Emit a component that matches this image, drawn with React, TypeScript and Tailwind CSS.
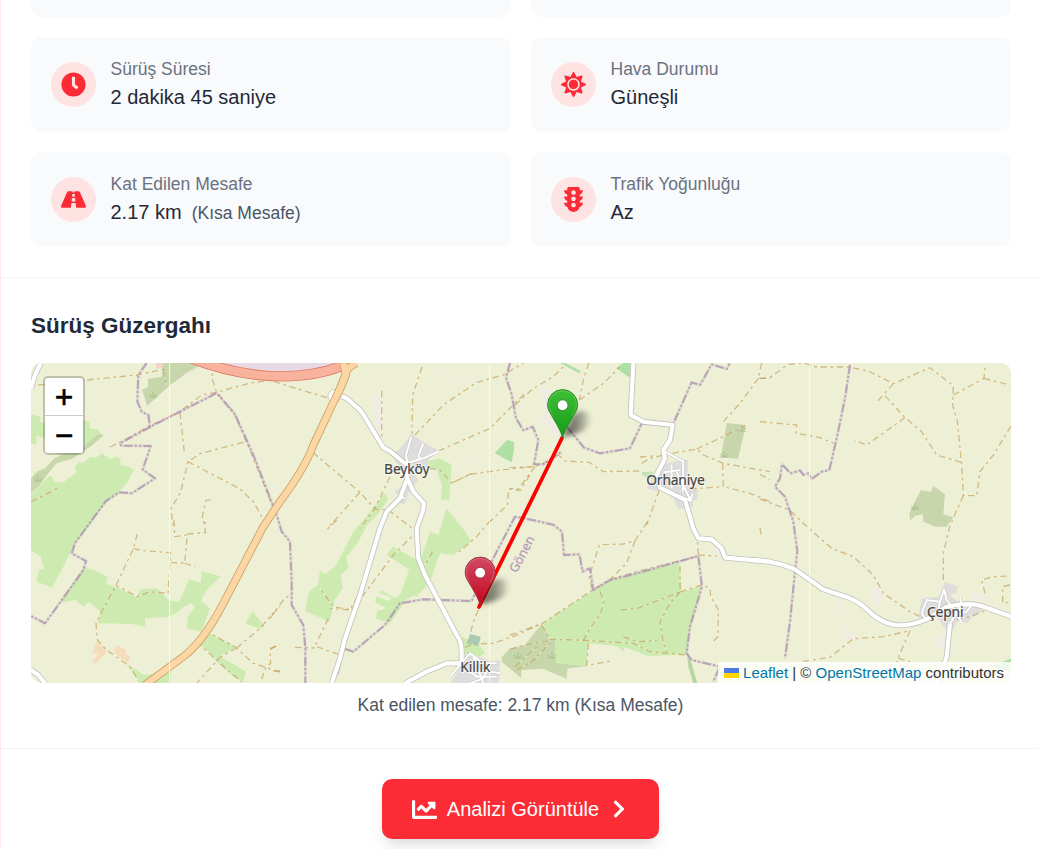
import type { ReactNode } from "react";
import { FaClock, FaSun, FaRoad, FaTrafficLight, FaChartLine, FaChevronRight } from "react-icons/fa";

type Shape = { at: [number, number]; d: string; color?: string; width?: number };

const A: [number, number] = [20, 355];
const B: [number, number] = [20, 520];
const C: [number, number] = [270, 355];
const D: [number, number] = [270, 520];
const E: [number, number] = [510, 355];
const F: [number, number] = [510, 520];
const G: [number, number] = [760, 355];
const H: [number, number] = [760, 520];

const MEADOW = "#cdebb0";
const SCRUB = "#c8d7ab";
const TOWN = "#dfdddc";
const YARD = "#f1ece2";
const ORCHARD = "#aedfa3";

const areas: Shape[] = [
  { at: A, color: MEADOW, d: "M33 178L62 186L60 200L78 205L190 195L208 200L210 220L235 224L246 240L215 265L170 290L140 302L75 290L75 250L50 240L48 270L33 265Z" },
  { at: A, color: SCRUB, d: "M33 370L50 350L75 340L105 308L190 275L235 238L252 240L215 272L160 310L110 325L85 355L60 390L33 414Z" },
  { at: A, color: MEADOW, d: "M33 416L60 392L90 360L105 380L130 382L172 350L162 338L178 320L186 326L210 306L228 308L245 294L270 312L292 304L304 318L298 328L328 335L342 345L318 388L298 410L270 430L240 465L205 512L33 512Z" },
  { at: B, color: MEADOW, d: "M33 0H222L165 70L130 140L96 203L48 184L58 148L72 146L62 110L33 90Z" },
  { at: B, color: MEADOW, d: "M192 140L240 158L264 172L258 192L288 200L350 230L362 208L412 205L448 242L478 245L507 178L543 188L545 154L602 169L560 210L543 242L570 265L545 335L500 325L503 290L524 262L514 248L490 262L470 278L440 292L375 295V320L335 312L233 310L240 274L208 247L190 260L165 240L118 250Z" },
  { at: B, color: MEADOW, d: "M552 330L652 382L600 408L678 455L670 486L640 470L590 425L560 390L528 365Z" },
  { at: B, color: MEADOW, d: "M698 274L734 318L722 328L676 310Z" },
  { at: B, color: MEADOW, d: "M318 430L372 465L452 455V490H360Z" },
  { at: B, color: "#f5dcba", d: "M230 364L258 385L256 402L226 432L216 426L234 404L218 396Z" },
  { at: B, color: "#f5dcba", d: "M290 375L318 390V402L330 410L324 430L280 396Z" },
  { at: A, color: "#f3d3c7", d: "M408 24H450V40H408Z" },
  { at: A, color: SCRUB, d: "M430 24H542L536 40L495 60L450 90L382 154L366 104L385 95L383 72L425 65Z" },
  { at: A, color: "#e8dae4", d: "M590 24H1000L960 42L850 53L700 42Z" },
  { at: C, color: TOWN, d: "M426 236L450 255L508 288L478 312L470 340L430 350L444 375L430 395L415 415L404 450L382 442L388 425L374 410L392 398L404 370L390 335L362 300L385 285Z" },
  { at: C, color: YARD, d: "M308 122L330 112L336 250L316 208Z" },
  { at: C, color: YARD, d: "M462 450L485 470L486 488L462 478Z" },
  { at: C, color: MEADOW, d: "M470 320L508 309L545 330L538 436L513 434L516 390L500 345L478 340Z" },
  { at: C, color: MEADOW, d: "M530 460L582 525L605 560L550 600L510 595L480 680L440 725L430 722L408 735L360 805L318 790L322 768L350 760L315 740L320 724L355 738L366 728L328 715L334 706L376 730L390 720L418 644L350 600L368 575L450 620L480 530L505 540Z" },
  { at: C, color: MEADOW, d: "M342 414L355 430L330 470L290 512L265 560L230 605L235 640L212 660L218 700L195 735L178 800L106 768L116 710L144 690L150 646L165 658L195 635L250 530L285 490Z" },
  { at: C, color: ORCHARD, d: "M674 294L712 254L732 262V285L725 322Z" },
  { at: D, color: MEADOW, d: "M575 350L625 372L645 400L620 415L580 400Z" },
  { at: D, color: "#aacbaf", d: "M600 342L632 350L626 378L590 372Z" },
  { at: D, color: TOWN, d: "M600 400L640 415L665 425L690 420L686 490H540L560 460L575 430Z" },
  { at: F, color: SCRUB, d: "M95 312L136 360L138 428L228 438L172 446L170 476L130 460L100 446L35 450L33 474L-25 425L-25 412L0 385L45 374Z" },
  { at: F, color: MEADOW, d: "M98 308L245 212L300 180L510 126L515 216L574 195L556 270L535 340L532 404L415 408L340 380L345 398L320 378L234 370L230 440L136 426V362L118 358Z" },
  { at: F, color: "#b7d6a2", d: "M532 404L545 430L562 490H550L535 440Z" },
  { at: E, color: YARD, d: "M84 84L135 110L160 240L145 250L75 185L110 175Z" },
  { at: E, color: ORCHARD, d: "M318 40L340 24H362V70Z" },
  { at: E, color: ORCHARD, d: "M150 24H165L212 48L206 54Z" },
  { at: E, color: SCRUB, d: "M650 204L708 210L684 312L633 306Z" },
  { at: E, color: "#c2e4b4", d: "M395 350H428L436 378L395 360Z" },
  { at: E, color: TOWN, d: "M470 325L520 315H535L530 390L566 400L560 435L548 438L550 455L505 462L490 430L450 400L440 410L410 398L440 350Z" },
  { at: E, color: YARD, d: "M470 185L495 180V220L478 255L466 215Z" },
  { at: F, color: YARD, d: "M610 85L632 75L655 112L625 108Z" },
  { at: G, color: SCRUB, d: "M482 406L512 410L520 393L555 418L550 478L580 487L560 515L528 515L490 500L489 478L465 482L450 497L448 475Z" },
  { at: H, color: TOWN, d: "M555 185L594 200L588 220L570 224L595 245L675 250L660 280L640 290L620 310L595 300L570 345L530 290L500 300L475 292L485 236L535 230Z" },
  { at: H, color: YARD, d: "M635 215L678 225V250H630Z" },
  { at: H, color: YARD, d: "M328 215L352 194L375 225L350 262Z" },
  { at: H, color: YARD, d: "M236 235L254 238L235 276L222 270Z" },
  { at: H, color: YARD, d: "M248 314L294 350L284 360L242 352Z" },
  { at: H, color: YARD, d: "M530 342H556V400L526 375Z" },
  { at: H, color: ORCHARD, d: "M755 415V455L690 440Z" },
];

const tracks: Shape[] = [
  { at: A, d: "M55 90L200 75L350 60L435 42" },
  { at: A, d: "M430 45L440 95" },
  { at: A, d: "M270 276L300 262L390 212L480 170L545 120L590 112L690 84L750 76L860 110L922 128" },
  { at: A, d: "M580 24L576 70L590 112L640 170L690 285L740 410L760 460" },
  { at: A, d: "M480 172L494 300" },
  { at: A, d: "M670 262L540 296L504 320L482 412L452 462L460 512" },
  { at: A, d: "M504 320L660 402L700 440L728 490" },
  { at: A, d: "M572 434L558 436L546 490L556 512" },
  { at: A, d: "M33 440L112 400" },
  { at: B, d: "M352 42L340 86L288 196L240 285L228 310L232 360L260 390L330 440L355 482" },
  { at: B, d: "M340 86L370 92L452 98L444 220L390 215L352 230L288 196" },
  { at: B, d: "M462 0L464 50L502 45L494 130L452 127M494 130L525 140M502 42L556 38L554 0" },
  { at: B, d: "M552 330L650 384L700 430L780 456M650 384L720 325L780 258M650 384L600 412L530 490" },
  { at: B, d: "M530 365L600 430L665 486M725 478L738 440L752 430L750 390L770 375" },
  { at: C, d: "M335 108V248M456 36L428 120L426 236M435 240L520 150L620 82L700 60L760 24M505 288L660 220L770 110" },
  { at: C, d: "M478 340L510 345L545 384L600 358L700 344L780 336M545 384L605 355" },
  { at: C, d: "M128 292L270 412L315 462L350 465M270 412L180 512M360 365L315 460L270 520" },
  { at: C, d: "M655 505L712 450L716 402L750 406L780 360" },
  { at: C, d: "M355 465L440 530L370 600L280 720L245 765L190 755L150 700" },
  { at: D, d: "M662 0L620 50L560 102M488 95L460 145M262 230L240 270L180 265M175 295L135 378L210 405M75 382L135 384M0 295L40 240L58 225M0 385L22 378M10 453H30M625 270L610 305L603 335" },
  { at: D, d: "M585 382L610 372L670 370L740 345L815 310M200 0L165 35" },
  { at: E, d: "M15 150L70 100L130 65L165 30M236 24L220 75L208 135M208 135L280 85L330 35" },
  { at: E, d: "M0 338L75 335L110 320L145 300L165 318L238 322L280 350L395 348M75 335L25 402L0 400" },
  { at: E, d: "M395 325L420 310L470 298L560 282L580 300L640 325L780 350M390 306L440 302M560 282L640 245L705 212M638 325L640 395L720 415L780 440M540 402L640 395M448 405L410 510" },
  { at: E, d: "M755 24L745 70L780 70M745 70L690 145L640 200" },
  { at: F, d: "M0 345L95 312L160 268L245 212L300 178L380 155L565 108M412 5L375 62L340 72L268 74L238 170L246 208M375 62L350 130L300 178" },
  { at: F, d: "M270 215L282 245L270 285L240 325L220 362M332 270L380 266L510 216V130M510 216L480 250L450 305L460 370L470 395M510 216L575 195L600 205L602 228L625 270L624 350L604 370" },
  { at: F, d: "M95 315L120 358L205 360L370 370L420 395L530 405M235 370L230 436L310 422M340 350L380 365L440 362" },
  { at: F, d: "M0 388L45 375L120 362M15 440L80 380M60 430L120 370M20 450L90 410M565 105L562 60M565 105L620 108" },
  { at: G, d: "M0 70L30 68L85 28L130 24L170 36L265 36L325 48L400 86L510 38L580 92L578 150L592 200L605 330L610 422L650 422L660 350L700 300L755 210M400 86L350 142M375 122L435 188L485 230L530 300L605 322M435 188L320 270L285 256M580 120L672 70L676 30M672 70L750 90" },
  { at: G, d: "M0 200L110 210L108 235L180 248L220 264M0 358L30 374M0 432L90 466L130 505L215 580L280 605L340 660L370 715L450 770L480 785M610 422L570 512L550 595V675" },
  { at: H, d: "M130 424L210 412L280 356L370 350L450 332M450 332L420 400L410 430M675 220L665 180L700 170L750 168M750 195L728 200V248H755M590 300L640 286L680 270M0 24L5 50M415 415L450 425" },
];

const borders: Shape[] = [
  { at: A, d: "M380 24L355 60L352 140L365 170L385 180L390 216L590 114L645 178L700 300L770 480L785 530L810 560L815 680L815 750L850 810L856 880V985" },
  { at: A, d: "M390 216L300 265L304 272L392 273L368 344L405 370L335 415L298 412L258 438L205 510L165 565L155 595L198 618L190 645L75 805L33 783" },
  { at: D, d: "M185 490L205 455L220 385L250 395L345 315L390 250L460 238L605 243L620 210L735 -10L763 -5L850 14L876 35L882 105L928 103L938 155L960 145L970 210L1020 180L1100 160L1285 108L1296 200L1275 270L1260 320L1250 400L1265 420L1350 440L1330 485" },
  { at: E, d: "M0 24L-12 68L5 118L18 190L40 226L68 215L85 255L72 328L100 328L155 290" },
  { at: E, d: "M170 215L222 278L270 295L360 280L395 206L485 210" },
  { at: E, d: "M485 255L488 210L545 82L570 90L605 28L650 42L660 24" },
  { at: G, d: "M270 30L255 130L230 250L208 345L185 350L155 372L145 355L130 360L120 346L92 355L66 328L60 370L45 395L75 425L100 500L112 590L105 650L90 800L75 910" },
];

const minorRoads: Shape[] = [
  { at: C, d: "M424 245L408 300L412 325M408 325L460 310L508 288M460 265L445 302L452 315M412 370L395 420L352 468M390 423L404 430" },
  { at: E, d: "M465 290L520 320L518 410M462 352L510 345M440 350L450 400L545 438M485 400V330M500 350L540 432M548 415L540 440" },
  { at: D, d: "M540 470L600 400L640 430L680 430M580 440L620 470L680 470M610 410L640 490M660 435L640 475L600 490M575 455L630 450L690 460" },
  { at: H, d: "M500 300L485 280L500 240L540 245L552 208L560 240L590 280L605 308M540 245L535 275M570 310L605 260L600 232M590 260L635 255L620 275L590 285" },
];

const roads: Shape[] = [
  { at: C, d: "M205 125Q225 120 250 148Q275 165 290 195L340 278L360 288L410 330L412 370L430 410L462 445L458 470L440 520L445 610L465 660L560 840Q575 860 575 890V925L530 925L470 950L405 985" },
  { at: C, d: "M412 370L390 430L350 470L330 520L270 720L225 850L210 910L185 985" },
  { at: A, d: "M33 100L45 60L62 24" },
  { at: B, d: "M33 450L55 465L75 490" },
  { at: E, d: "M370 24L362 180L400 200L488 210L480 255L460 285L465 310L440 360L450 398L525 435L550 520L565 550L605 553L635 580L645 608L780 620" },
  { at: H, d: "M-30 120L0 122Q60 128 105 148L190 208L250 228Q290 238 325 272T400 314T500 298L560 260Q620 245 665 258L760 292" },
  { at: H, d: "M570 310L560 410L530 490" },
];

const primary: Shape[] = [
  { at: C, d: "M258 24L234 40L210 100L130 270Q105 340 30 440L-20 515L-140 745Q-200 860 -260 905L-375 990" },
  { at: C, d: "M220 24L228 60L205 115" },
];

const motorway = "M188 357Q235 376 282 376.4Q322 375.5 346 364";

const place = ([x, y]: [number, number]) => `translate(${x} ${y}) scale(0.33333)`;

function Lines({ items, color, width, dash, opacity = 1 }: { items: Shape[]; color: string; width: number; dash?: string; opacity?: number }) {
  return (
    <g fill="none" stroke={color} strokeWidth={width * 3} strokeDasharray={dash} strokeLinejoin="round" strokeOpacity={opacity}>
      {items.map((s, i) => (
        <path key={i} d={s.d} transform={place(s.at)} />
      ))}
    </g>
  );
}

function Scrubs() {
  const spots = [[153, 395], [915, 507], [518, 656], [552, 656], [38, 479], [724, 455], [742, 429]];
  return (
    <g stroke="#a9bf8f" strokeWidth="0.9" fill="none">
      {spots.map(([x, y]) => (
        <path key={`${x}-${y}`} d={`M${x - 4} ${y + 2}h8M${x} ${y + 2}v-6M${x} ${y + 2}l-4 -3M${x} ${y + 2}l4 -3`} />
      ))}
    </g>
  );
}

function Pin({ x, y, fill, edge }: { x: number; y: number; fill: string; edge: string }) {
  return (
    <g transform={`translate(${x} ${y})`}>
      <path d="M0 -1L9 -21Q18 -31 27 -24Q32 -16 22 -8Q12 -3 0 -1Z" fill="url(#shade)" filter="url(#soft)" />
      <path
        d="M0 -0.6C-1.6 -6.5 -6 -14 -11 -22.5C-13.6 -26.7 -15 -29.4 -15 -33.4A15 15 0 0 1 15 -33.4C15 -29.4 13.6 -26.7 11 -22.5C6 -14 1.6 -6.5 0 -0.6Z"
        fill={`url(#${fill})`}
        stroke={edge}
        strokeWidth="1"
      />
      <path d="M-9.8 -22.6C-12.4 -26.8 -13.8 -29.6 -13.8 -33.4A13.8 13.8 0 0 1 13.8 -33.4C13.8 -29.6 12.4 -26.8 9.8 -22.6" fill="none" stroke="#fff" strokeOpacity="0.14" strokeWidth="1.2" />
      <circle cx="0" cy="-32.8" r="5.4" fill="#fff" stroke={edge} strokeWidth="0.9" />
    </g>
  );
}

function Place({ x, y, width, children }: { x: number; y: number; width: number; children: string }) {
  return (
    <g textAnchor="middle" fontSize="13.8">
      <text x={x} y={y} textLength={width} fill="#fff" fillOpacity="0.5" stroke="#fff" strokeOpacity="0.55" strokeWidth="2.4" strokeLinejoin="round" aria-hidden="true">
        {children}
      </text>
      <text x={x} y={y} textLength={width} fill="#454545" stroke="#454545" strokeWidth="0.2">
        {children}
      </text>
    </g>
  );
}

function RouteMap() {
  return (
    <svg viewBox="31 363 980 320" className="block h-[320px] w-[980px] bg-[#eef0d5] font-['Noto_Sans',sans-serif]">
      <defs>
        <linearGradient id="green" x1="0" y1="0" x2="0" y2="1">
          <stop offset="0" stopColor="#41bf38" />
          <stop offset="1" stopColor="#129c15" />
        </linearGradient>
        <linearGradient id="red" x1="0" y1="0" x2="0" y2="1">
          <stop offset="0" stopColor="#d04a62" />
          <stop offset="1" stopColor="#c6071f" />
        </linearGradient>
        <linearGradient id="shade" x1="0" y1="0" x2="1" y2="0">
          <stop offset="0" stopColor="#000" stopOpacity="0.65" />
          <stop offset="0.5" stopColor="#000" stopOpacity="0.42" />
          <stop offset="1" stopColor="#000" stopOpacity="0.04" />
        </linearGradient>
        <filter id="soft" x="-40%" y="-40%" width="200%" height="180%">
          <feGaussianBlur stdDeviation="2.4" />
        </filter>
      </defs>
      {areas.map((s, i) => (
        <path key={i} d={s.d} fill={s.color} transform={place(s.at)} />
      ))}
      <Scrubs />
      <g fill="none" stroke="#f3eee5" strokeWidth="1.3">
        <path d="M148 406L186 374L206 363M432 366Q450 380 480 381M453 464Q475 460 488 443M670 446L705 438" />
      </g>
      <Lines items={tracks} color="#fff" width={2} opacity={0.22} />
      <Lines items={tracks} color="#bb9240" width={1.35} dash="20 10 9 10" opacity={0.58} />
      <Lines items={borders} color="#b99fc0" width={2.8} opacity={0.28} />
      <Lines items={borders} color="#ab8eae" width={2} dash="26 7 6 7 6 7" opacity={0.72} />
      <Lines items={minorRoads} color="#c5c3c0" width={3} />
      <Lines items={roads} color="#c3c3be" width={5.8} />
      <Lines items={minorRoads} color="#fff" width={2} />
      <Lines items={roads} color="#fff" width={4.1} />
      <g fill="none">
        <path d={motorway} stroke="#dd7c6b" strokeWidth="10.4" />
        <path d={motorway} stroke="#f9b29c" strokeWidth="8.6" />
      </g>
      <circle cx="334.5" cy="396" r="6.6" fill="#fff" stroke="#bfbfb9" strokeWidth="0.8" />
      <Lines items={primary} color="#c8a363" width={8} />
      <Lines items={primary} color="#fcd6a4" width={6.3} />
      <g fill="#fdfde9">
        <rect x="169.2" y="363" width="0.9" height="320" />
        <rect x="489.2" y="363" width="0.9" height="320" />
        <rect x="809.2" y="363" width="0.9" height="320" />
      </g>
      <Place x={406.8} y={474} width={45.5}>Beyköy</Place>
      <Place x={675.5} y={484.5} width={58.5}>Orhaniye</Place>
      <Place x={945.2} y={616.5} width={36.5}>Çepni</Place>
      <Place x={475.3} y={672} width={30}>Killik</Place>
      <text transform="translate(516.5 573.5) rotate(-62)" fontSize="12.6" fill="#b596b8" stroke="#b596b8" strokeWidth="0.2">
        Gönen
      </text>
      <path d="M562 438L479 607" stroke="#f00" strokeWidth="3.75" strokeLinecap="round" />
      <Pin x={562.6} y={438} fill="green" edge="#2b8a28" />
      <Pin x={480.2} y={605.5} fill="red" edge="#9d2f41" />
    </svg>
  );
}

function Stat({ icon, label, value, note }: { icon: ReactNode; label: string; value: string; note?: string }) {
  return (
    <div className="flex h-[95px] items-center rounded-[10px] bg-gray-50 p-5">
      <div className="mr-[14.5px] flex size-[45px] shrink-0 items-center justify-center rounded-full bg-[#ffe2e2] text-[25px] text-[#fb2c36]">{icon}</div>
      <div>
        <p className="text-[17.5px] leading-[25px] text-[#6a7282]">{label}</p>
        <p className="text-[20px] leading-[30px] text-[#1e2939]">
          {value}
          {note && <span className="ml-[10px] text-[17.5px] text-[#4a5565]">{note}</span>}
        </p>
      </div>
    </div>
  );
}

export default function App() {
  return (
    <main className="h-[849px] w-full overflow-hidden bg-white font-['Liberation_Sans',Arial,sans-serif]">
      <div className="h-full w-[1042px] border-l border-[#fdeaea]">
        <section className="border-b border-gray-100 px-[30px] pb-[30px]">
          <div className="grid grid-cols-[480px_480px] gap-x-5">
            <div className="h-[17px] rounded-b-[10px] bg-gray-50" />
            <div className="h-[17px] rounded-b-[10px] bg-gray-50" />
          </div>
          <div className="mt-5 grid grid-cols-[480px_480px] gap-5">
            <Stat icon={<FaClock />} label="Sürüş Süresi" value="2 dakika 45 saniye" />
            <Stat icon={<FaSun />} label="Hava Durumu" value="Güneşli" />
            <Stat icon={<FaRoad />} label="Kat Edilen Mesafe" value="2.17 km" note="(Kısa Mesafe)" />
            <Stat icon={<FaTrafficLight />} label="Trafik Yoğunluğu" value="Az" />
          </div>
        </section>

        <section className="border-b border-gray-100 px-[30px] pt-[30px] pb-[30px]">
          <h2 className="mb-5 text-[22.5px] leading-[35px] font-bold text-[#1e2939]">Sürüş Güzergahı</h2>
          <div className="relative h-[320px] w-[980px] overflow-hidden rounded-[10px]">
            <RouteMap />
            <div className="absolute top-[13px] left-3 w-[42px] overflow-hidden rounded-[5px] border-2 border-black/20 bg-clip-padding font-['DejaVu_Sans_Mono',monospace] text-[30px] text-black">
              <button className="flex h-[38px] w-full items-center justify-center border-b border-[#ccc] bg-white leading-none [-webkit-text-stroke:0.4px_#000]">+</button>
              <button className="flex h-[37px] w-full items-center justify-center bg-white leading-none [-webkit-text-stroke:0.4px_#000]">−</button>
            </div>
            <div className="absolute right-0 bottom-0 flex h-[21px] items-center bg-white/80 pt-px pr-[7px] pl-[6px] text-[15px] whitespace-pre text-[#333]">
              <svg viewBox="0 0 15 10" className="mr-1 h-[10px] w-[15px]">
                <path fill="#4C7BE1" d="M0 0h15v5H0z" />
                <path fill="#FFD500" d="M0 5h15v5H0z" />
              </svg>
              <a className="text-[#0078a8]">Leaflet</a>
              <span> | © </span>
              <a className="text-[#0078a8]">OpenStreetMap</a>
              <span> contributors</span>
            </div>
          </div>
          <p className="mt-[10px] w-[979px] text-center text-[17.5px] leading-[25px] text-[#4a5565]">Kat edilen mesafe: 2.17 km (Kısa Mesafe)</p>
        </section>

        <section className="flex w-[1039px] justify-center pt-[30px]">
          <button className="flex h-[60px] w-[277px] items-center justify-center rounded-[10px] bg-[#fb2c36] text-[20px] text-white shadow-[0_12px_19px_-4px_rgba(0,0,0,0.1),0_5px_8px_-5px_rgba(0,0,0,0.1)]">
            <FaChartLine className="mr-[10px] size-[25px]" />
            Analizi Görüntüle
            <FaChevronRight className="ml-[10px] size-5" />
          </button>
        </section>
      </div>
    </main>
  );
}
